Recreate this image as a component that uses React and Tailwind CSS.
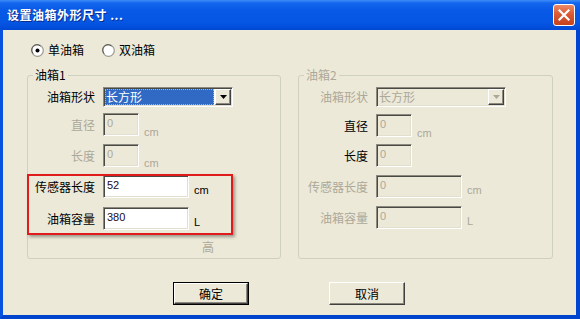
import clsx from 'clsx';

const cjk = "font-['Noto_Sans_CJK_SC',sans-serif]";
const lat = "font-['Liberation_Sans',sans-serif]";
// classic sunken edit border
const sunken =
  'border border-t-[#8C8A80] border-l-[#8C8A80] border-b-white border-r-white shadow-[inset_1px_1px_0_#4A4A44,inset_-1px_-1px_0_#E2DFD0]';
const raised =
  'border border-t-white border-l-white border-b-[#404040] border-r-[#404040] shadow-[inset_-1px_-1px_0_#8C8A80]';

const Radio = ({ checked }) => (
  <svg width="13" height="13" viewBox="0 0 13 13">
    <circle cx="6.5" cy="6.5" r="5.8" fill="#fff" stroke="#9C9A90" strokeWidth="1.2" />
    <path d="M2.2 9.5 A5 5 0 0 1 9.5 2.2" fill="none" stroke="#55534C" strokeWidth="1" />
    {checked && <circle cx="6.5" cy="6.5" r="2" fill="#000" />}
  </svg>
);

const Arrow = ({ dim }) => (
  <svg width="7" height="4" viewBox="0 0 7 4">
    <path d="M0 0 H7 L3.5 4 Z" fill={dim ? '#ACA899' : '#000'} />
  </svg>
);

const Input = ({ value, wide, disabled }) => (
  <div
    className={clsx(
      sunken,
      lat,
      'h-[23px] shrink-0 pl-[3px] pt-[3px] text-[11px] leading-[13px]',
      wide ? 'w-[86px]' : 'w-[36px]',
      disabled ? 'bg-[#ECE9D8] text-[#ACA899]' : 'bg-white text-[#1A0A1A]'
    )}
  >
    {value}
  </div>
);

const Field = ({ label, labelW, value, wide, disabled, dimLabel, unit, className }) => (
  <div className={clsx('flex h-[23px] items-center', className)}>
    <span
      className={clsx(
        cjk,
        labelW,
        'mr-[8px] shrink-0 text-right text-[12px] leading-[14px]',
        dimLabel ? 'text-[#ACA899]' : 'text-black'
      )}
    >
      {label}
    </span>
    <Input value={value} wide={wide} disabled={disabled} />
    {unit && (
      <span
        className={clsx(
          lat,
          'ml-[5px] self-end text-[11px] leading-none',
          wide ? 'mb-[2px]' : 'mb-[-2px]',
          disabled ? 'text-[#ACA899]' : 'text-black'
        )}
      >
        {unit}
      </span>
    )}
  </div>
);

const Combo = ({ label, labelW, dim }) => (
  <div className="flex h-[20px] items-center">
    <span
      className={clsx(
        cjk,
        labelW,
        'mr-[8px] shrink-0 text-right text-[12px] leading-[14px]',
        dim ? 'text-[#ACA899]' : 'text-black'
      )}
    >
      {label}
    </span>
    <div className={clsx(sunken, 'flex h-[20px] w-[130px] items-stretch gap-[1px] p-[1px]', dim ? 'bg-[#ECE9D8]' : 'bg-white')}>
      <div
        className={clsx(
          cjk,
          'flex-1 pl-[1px] text-[12px] leading-[16px]',
          dim ? 'text-[#ACA899]' : 'bg-[#316AC5] text-white outline-1 outline-dotted outline-[#9CB6E0] -outline-offset-1'
        )}
      >
        长方形
      </div>
      <div className={clsx(raised, 'flex w-[16px] items-center justify-center bg-[#ECE9D8]')}>
        <Arrow dim={dim} />
      </div>
    </div>
  </div>
);

const GroupBox = ({ title, dim, className, children }) => (
  <div className={clsx('relative h-[184px] rounded-[3px] border border-[#D0D0BF]', className)}>
    <span
      className={clsx(
        cjk,
        'absolute left-[5px] top-[-8px] bg-[#ECE9D8] px-[2px] text-[12px] leading-[14px]',
        dim ? 'text-[#ACA899]' : 'text-black'
      )}
    >
      {title}
    </span>
    {children}
  </div>
);

const Button = ({ children, isDefault }) => (
  <div className={clsx('h-[23px] w-[76px]', isDefault ? 'border border-black' : '')}>
    <div
      className={clsx(
        raised,
        cjk,
        'flex h-full w-full items-center justify-center bg-[#ECE9D8] text-[12px] text-black'
      )}
    >
      {children}
    </div>
  </div>
);

export default function App() {
  return (
    <div className="relative flex h-[319px] w-[580px] flex-col overflow-hidden bg-[#0055E5]">
      {/* title bar */}
      <div className="flex h-[30px] shrink-0 items-center justify-between bg-[linear-gradient(to_bottom,#3D8DF7_0%,#1466EE_10%,#0759E6_35%,#0556E3_75%,#0049D4_100%)] pl-[7px] pr-[5px]">
        <span className={clsx(cjk, 'text-[12px] font-bold tracking-[0.5px] text-white [text-shadow:1px_1px_0_#0A2A8C]')}>
          设置油箱外形尺寸 ...
        </span>
        <div className="flex h-[22px] w-[22px] items-center justify-center rounded-[3px] border border-white bg-[linear-gradient(to_bottom,#EB8A67_0%,#DB5A33_45%,#C5421C_100%)]">
          <svg width="12" height="12" viewBox="0 0 12 12">
            <path d="M1.5 1.5 L10.5 10.5 M10.5 1.5 L1.5 10.5" stroke="#fff" strokeWidth="2.2" strokeLinecap="square" />
          </svg>
        </div>
      </div>

      {/* body */}
      <div className="flex flex-1 flex-col border-b-[4px] border-l-[3px] border-r-[4px] border-b-[#0043CC] border-l-[#0852E0] border-r-[#0045D0] bg-[#ECE9D8]">
        <div className={clsx(cjk, 'flex h-[14px] items-center pl-[28px] mt-[13px] text-[12px] text-black')}>
          <Radio checked />
          <span className="ml-[4px]">单油箱</span>
          <span className="ml-[18px] flex items-center">
            <Radio />
          </span>
          <span className="ml-[4px]">双油箱</span>
        </div>

        <div className="mt-[18px] flex gap-[17px] pl-[24px]">
          <GroupBox title="油箱1" className="w-[254px]">
            <div className="flex flex-col pt-[11px]">
              <Combo label="油箱形状" labelW="w-[67px]" />
              <Field className="mt-[6px]" label="直径" labelW="w-[67px]" value="0" disabled dimLabel unit="cm" />
              <Field className="mt-[8px]" label="长度" labelW="w-[67px]" value="0" disabled dimLabel unit="cm" />
              <Field className="mt-[8px]" label="传感器长度" labelW="w-[67px]" value="52" wide unit="cm" />
              <Field className="mt-[9px]" label="油箱容量" labelW="w-[67px]" value="380" wide unit="L" />
              <span className={clsx(cjk, 'mt-[11px] ml-[174px] text-[12px] leading-[12px] text-[#ACA899]')}>高</span>
            </div>
          </GroupBox>

          <GroupBox title="油箱2" dim className="w-[255px]">
            <div className="flex flex-col pt-[11px]">
              <Combo label="油箱形状" labelW="w-[69px]" dim />
              <Field className="mt-[7px]" label="直径" labelW="w-[69px]" value="0" disabled unit="cm" />
              <Field className="mt-[7px]" label="长度" labelW="w-[69px]" value="0" disabled />
              <Field className="mt-[8px]" label="传感器长度" labelW="w-[69px]" value="0" wide disabled dimLabel unit="cm" />
              <Field className="mt-[8px]" label="油箱容量" labelW="w-[69px]" value="0" wide disabled dimLabel unit="L" />
            </div>
          </GroupBox>
        </div>

        <div className="mt-[23px] flex gap-[80px] pl-[170px]">
          <Button isDefault>确定</Button>
          <Button>取消</Button>
        </div>
      </div>

      {/* red annotation frame */}
      <div className="absolute left-[27px] top-[174px] h-[61px] w-[206px] border-2 border-[#E01B1B] shadow-[2px_2px_3px_rgba(0,0,0,0.35)]" />
    </div>
  );
}
